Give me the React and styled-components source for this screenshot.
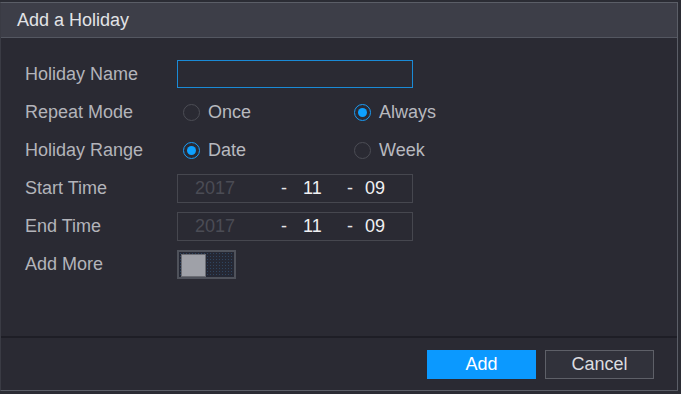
import React from 'react'
import styled, { createGlobalStyle } from 'styled-components'

const Global = createGlobalStyle`
  html, body {
    margin: 0;
    padding: 0;
    background: #2b2c34;
    width: 681px;
    height: 394px;
    overflow: hidden;
  }
  body {
    font-family: "Liberation Sans", Arial, sans-serif;
  }
`

const Dialog = styled.div`
  margin-top: 2px;
  width: 678px;
  height: 389px;
  box-sizing: border-box;
  border: 1px solid #5b5e67;
  border-left-color: #3a3b44;
  background: #2a2a33;
  display: flex;
  flex-direction: column;
`

const Header = styled.div`
  height: 34px;
  flex-shrink: 0;
  background: #3d3e48;
  border-bottom: 1px solid #545761;
  display: flex;
  align-items: center;
  padding-left: 16px;
  color: #e2e3e6;
  font-size: 18px;
`

const Body = styled.div`
  flex: 1;
  padding: 17px 0 0 24px;
`

const Row = styled.div`
  height: 38px;
  display: flex;
  align-items: center;
`

const Label = styled.div`
  width: 152px;
  color: #b3b4ba;
  font-size: 18px;
`

const TextInput = styled.div`
  width: 236px;
  height: 28px;
  box-sizing: border-box;
  border: 1px solid #1a8ad6;
`

const Option = styled.label`
  width: 165px;
  display: flex;
  align-items: center;
  gap: 8px;
  margin-left: 6px;
  color: #b8b9bf;
  font-size: 18px;
`

const Circle = styled.span`
  width: 17px;
  height: 17px;
  box-sizing: border-box;
  border-radius: 50%;
  border: 1.5px solid ${p => (p.on ? '#1a9cf5' : '#4c4d55')};
  display: flex;
  align-items: center;
  justify-content: center;
  &::after {
    content: '';
    width: 9px;
    height: 9px;
    border-radius: 50%;
    background: ${p => (p.on ? '#0ea1ff' : 'transparent')};
  }
`

const DateBox = styled.div`
  width: 236px;
  height: 29px;
  box-sizing: border-box;
  border: 1px solid #46474f;
  display: flex;
  align-items: center;
  font-size: 18px;
`

const Year = styled.span`
  color: #4b4c55;
  margin-left: 17px;
  width: 86px;
`

const Sep = styled.span`
  color: #e6e6e9;
  width: ${p => p.w}px;
`

const Part = styled.span`
  color: #f0f0f2;
  width: ${p => p.w}px;
`

const Toggle = styled.div`
  width: 59px;
  height: 29px;
  box-sizing: border-box;
  border: 2px solid #4f525b;
  padding: 2px;
  display: flex;
  background-color: #252834;
  background-image: radial-gradient(#2f4560 0.8px, transparent 0.9px);
  background-size: 3px 3px;
`

const Knob = styled.div`
  width: 23px;
  height: 21px;
  background: #9fa1a8;
  border: 1px solid #6b6d74;
`

const Footer = styled.div`
  height: 54px;
  box-sizing: border-box;
  flex-shrink: 0;
  border-top: 2px solid #1e1e26;
  display: flex;
  align-items: flex-start;
  justify-content: flex-end;
  padding: 12px 23px 0 0;
  gap: 9px;
`

const Button = styled.button`
  width: 109px;
  height: 29px;
  box-sizing: border-box;
  font-family: inherit;
  font-size: 18px;
  padding: 0;
  border: 1px solid ${p => (p.primary ? '#0b99ff' : '#5e6068')};
  background: ${p => (p.primary ? '#0b99ff' : '#31323b')};
  color: ${p => (p.primary ? '#ffffff' : '#dcdde0')};
`

const Radio = ({ on, children }) => (
  <Option>
    <Circle on={on} />
    {children}
  </Option>
)

const DateField = ({ year, month, day }) => (
  <DateBox>
    <Year>{year}</Year>
    <Sep w={22}>-</Sep>
    <Part w={44}>{month}</Part>
    <Sep w={18}>-</Sep>
    <Part w={30}>{day}</Part>
  </DateBox>
)

export default function App() {
  return (
    <>
      <Global />
      <Dialog>
        <Header>Add a Holiday</Header>
        <Body>
          <Row>
            <Label>Holiday Name</Label>
            <TextInput />
          </Row>
          <Row>
            <Label>Repeat Mode</Label>
            <Radio>Once</Radio>
            <Radio on>Always</Radio>
          </Row>
          <Row>
            <Label>Holiday Range</Label>
            <Radio on>Date</Radio>
            <Radio>Week</Radio>
          </Row>
          <Row>
            <Label>Start Time</Label>
            <DateField year="2017" month="11" day="09" />
          </Row>
          <Row>
            <Label>End Time</Label>
            <DateField year="2017" month="11" day="09" />
          </Row>
          <Row>
            <Label>Add More</Label>
            <Toggle>
              <Knob />
            </Toggle>
          </Row>
        </Body>
        <Footer>
          <Button primary>Add</Button>
          <Button>Cancel</Button>
        </Footer>
      </Dialog>
    </>
  )
}
